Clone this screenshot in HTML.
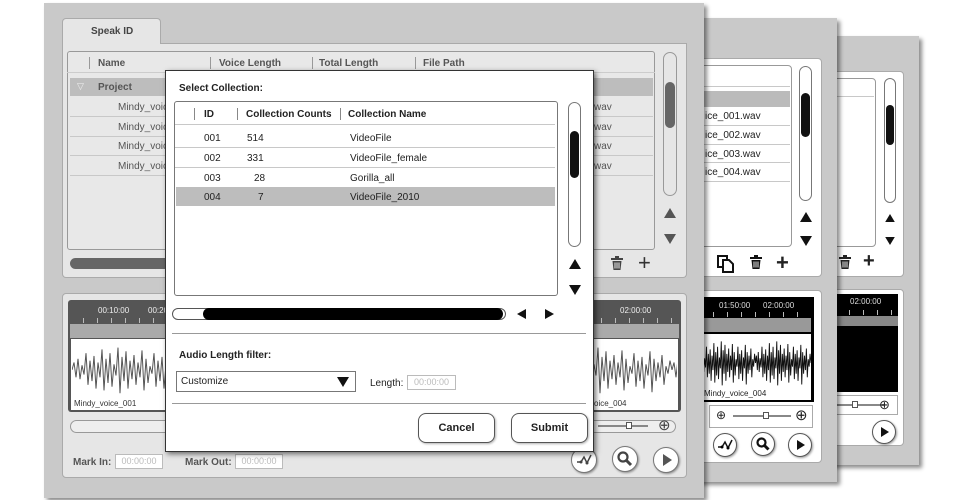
<!DOCTYPE html>
<html><head><meta charset="utf-8"><style>
*{box-sizing:border-box;margin:0;padding:0}
body{width:960px;height:500px;background:#fff;position:relative;overflow:hidden;font-family:"Liberation Sans",Arial,sans-serif;font-size:10px;color:#222}
.a{position:absolute}
.panel{background:#c9c9c9;box-shadow:3px 3px 4px rgba(0,0,0,.45)}
.grp{background:#e6e6e6;border:1px solid #aaa;border-radius:4px}
.grpw{background:#fff;border:1px solid #999;border-radius:4px}
.b{font-weight:bold}
.line{height:1px;background:#c8c8c8}
.sb{border:1px solid #777;border-radius:7px;background:#fff}
.circ{border:1.5px solid #555;border-radius:50%;background:#fff;box-shadow:1px 1px 2px rgba(0,0,0,.4)}
.tri-u{width:0;height:0;border-left:6px solid transparent;border-right:6px solid transparent;border-bottom:10px solid #111}
.tri-d{width:0;height:0;border-left:6px solid transparent;border-right:6px solid transparent;border-top:10px solid #111}
.inp{border:1px solid #bbb;background:#fff;color:#bbb;font-size:9px;text-align:center;line-height:13px}
.btn{border:1px solid #555;border-radius:8px;background:#fff;font-weight:bold;font-size:11px;text-align:center;box-shadow:1px 1px 2px rgba(0,0,0,.3)}
.ticks{background:repeating-linear-gradient(90deg,transparent 0 13px,#bbb 13px 14px)}
</style></head><body>

<svg width="0" height="0" style="position:absolute"><defs>
<polyline id="wv" fill="none" points="0,30 2,22 4,38 6,18 8,40 10,25 12,35 14,12 16,46 18,20 20,42 22,15 24,50 26,22 28,38 30,8 32,52 34,18 36,44 38,12 40,48 42,24 44,36 46,6 48,55 50,16 52,42 54,10 56,50 58,20 60,40 62,14 64,46 66,22 68,38 70,9 72,52 74,18 76,44 78,26 80,34 82,12 84,48 86,20 88,42 90,16 92,50 94,24 96,36 98,10 100,54 102,18 104,42 106,22 108,38 110,14 112,46 114,26 116,34 118,20 120,30"/>
<g id="trash"><rect x="5" y="0" width="4" height="2" fill="currentColor"/><rect x="1" y="2" width="12" height="2" fill="currentColor"/><path d="M2.5 5h9l-1 9h-7z" fill="currentColor"/><path d="M5 6.5v6M7 6.5v6M9 6.5v6" stroke="#fff" stroke-width=".9"/></g>
</defs></svg>

<!-- Panel 3 -->
<div class="a panel" style="left:830px;top:36px;width:89px;height:429px"></div>
<div class="a grp" style="left:822px;top:71px;width:82px;height:206px;background:#fff"></div>
<div class="a grpw" style="left:822px;top:78px;width:54px;height:169px"></div>
<div class="a line" style="left:822px;top:96px;width:52px"></div>
<div class="a sb" style="left:884px;top:78px;width:12px;height:125px"></div>
<div class="a" style="left:886px;top:105px;width:8px;height:40px;background:#111;border-radius:4px"></div>
<div class="a tri-u" style="left:884px;top:213px;transform:scale(.8)"></div>
<div class="a tri-d" style="left:884px;top:236px;transform:scale(.8)"></div>
<svg class="a" style="left:838px;top:255px;color:#222" width="14" height="15"><use href="#trash"/></svg>
<div class="a b" style="left:863px;top:250px;font-size:20px">+</div>
<div class="a grp" style="left:822px;top:289px;width:82px;height:157px;background:#fff"></div>
<div class="a" style="left:822px;top:294px;width:76px;height:98px;background:#000"></div>
<div class="a ticks" style="left:822px;top:310px;width:76px;height:5px"></div>
<div class="a" style="left:822px;top:316px;width:76px;height:10px;background:#888"></div>
<div class="a" style="left:850px;top:297px;color:#ddd;font-size:8px">02:00:00</div>
<div class="a" style="left:822px;top:395px;width:76px;height:20px;border:1px solid #aaa;background:#fff"></div>
<div class="a" style="left:830px;top:404px;width:55px;height:2px;background:#888"></div>
<div class="a" style="left:852px;top:401px;width:6px;height:7px;border:1px solid #555;background:#fff"></div>
<div class="a" style="left:879px;top:398px;font-size:13px;line-height:13px">⊕</div>
<div class="a circ" style="left:872px;top:420px;width:24px;height:24px"></div>
<div class="a" style="left:881px;top:427px;width:0;height:0;border-top:5px solid transparent;border-bottom:5px solid transparent;border-left:8px solid #111"></div>

<!-- Panel 2 -->
<div class="a panel" style="left:690px;top:18px;width:147px;height:464px"></div>
<div class="a grp" style="left:700px;top:58px;width:122px;height:219px;background:#fff"></div>
<div class="a grpw" style="left:700px;top:65px;width:92px;height:182px"></div>
<div class="a line" style="left:700px;top:86px;width:90px"></div>
<div class="a" style="left:700px;top:91px;width:90px;height:16px;background:#bbb"></div>
<div class="a" style="left:705px;top:111px;font-size:10px">ice_001.wav</div>
<div class="a line" style="left:700px;top:125px;width:90px"></div>
<div class="a" style="left:705px;top:130px;font-size:10px">ice_002.wav</div>
<div class="a line" style="left:700px;top:144px;width:90px"></div>
<div class="a" style="left:705px;top:149px;font-size:10px">ice_003.wav</div>
<div class="a line" style="left:700px;top:162px;width:90px"></div>
<div class="a" style="left:705px;top:167px;font-size:10px">ice_004.wav</div>
<div class="a line" style="left:700px;top:181px;width:90px"></div>
<div class="a sb" style="left:799px;top:66px;width:13px;height:135px"></div>
<div class="a" style="left:801px;top:93px;width:9px;height:44px;background:#111;border-radius:5px"></div>
<div class="a tri-u" style="left:800px;top:212px"></div>
<div class="a tri-d" style="left:800px;top:236px"></div>
<svg class="a" style="left:717px;top:255px" width="18" height="18"><rect x="1" y="1" width="9" height="11" fill="#fff" stroke="#111" stroke-width="2"/><path d="M6 5h6l4 4v8H6z" fill="#fff" stroke="#111" stroke-width="2"/></svg>
<svg class="a" style="left:749px;top:255px;color:#111" width="14" height="15"><use href="#trash"/></svg>
<div class="a b" style="left:776px;top:250px;font-size:22px">+</div>
<div class="a grp" style="left:700px;top:290px;width:122px;height:173px;background:#fff"></div>
<div class="a" style="left:700px;top:297px;width:114px;height:105px;background:#000"></div>
<div class="a ticks" style="left:700px;top:312px;width:111px;height:5px"></div>
<div class="a" style="left:700px;top:318px;width:111px;height:14px;background:#999"></div>
<div class="a" style="left:719px;top:301px;color:#ddd;font-size:8px">01:50:00</div>
<div class="a" style="left:763px;top:301px;color:#ddd;font-size:8px">02:00:00</div>
<div class="a" style="left:700px;top:334px;width:111px;height:66px;background:#fff"></div>
<svg class="a" style="left:700px;top:336px" width="111" height="52" viewBox="0 0 240 58" preserveAspectRatio="none"><g stroke="#111" stroke-width="2"><use href="#wv"/><use href="#wv" x="120"/></g></svg>
<div class="a" style="left:704px;top:389px;font-size:8px;background:#fff">Mindy_voice_004</div>
<div class="a" style="left:709px;top:405px;width:104px;height:23px;border:1px solid #aaa;background:#fff"></div>
<div class="a" style="left:716px;top:409px;font-size:12px;line-height:12px">⊕</div>
<div class="a" style="left:733px;top:415px;width:58px;height:2px;background:#888"></div>
<div class="a" style="left:763px;top:412px;width:6px;height:7px;border:1px solid #555;background:#fff"></div>
<div class="a" style="left:795px;top:408px;font-size:15px;line-height:15px">⊕</div>
<div class="a circ" style="left:713px;top:433px;width:24px;height:24px"></div>
<svg class="a" style="left:716px;top:437px" width="18" height="16"><path d="M2 10h4l3-5 3 6 4-8" fill="none" stroke="#111" stroke-width="1.5"/><circle cx="6" cy="10" r="1.5"/><circle cx="12" cy="11" r="1.5"/></svg>
<div class="a circ" style="left:751px;top:432px;width:24px;height:24px"></div>
<svg class="a" style="left:755px;top:436px" width="16" height="16"><circle cx="6.5" cy="6.5" r="4" fill="none" stroke="#111" stroke-width="2.2"/><path d="M9.5 9.5l4 4" stroke="#111" stroke-width="3"/></svg>
<div class="a circ" style="left:788px;top:433px;width:24px;height:24px"></div>
<div class="a" style="left:797px;top:440px;width:0;height:0;border-top:5px solid transparent;border-bottom:5px solid transparent;border-left:8px solid #111"></div>

<!-- Panel 1 -->
<div class="a panel" style="left:44px;top:3px;width:660px;height:495px"></div>
<div class="a" style="left:62px;top:18px;width:99px;height:27px;background:#e6e6e6;border:1px solid #aaa;border-bottom:none;border-radius:4px 4px 0 0"></div>
<div class="a b" style="left:91px;top:26px;color:#444">Speak ID</div>
<div class="a" style="left:62px;top:44px;width:625px;height:234px;background:#e6e6e6;border:1px solid #aaa;border-top:none;border-radius:0 0 4px 4px"></div>
<div class="a" style="left:160px;top:43px;width:527px;height:1px;background:#aaa"></div>
<div class="a" style="left:67px;top:51px;width:588px;height:199px;border:1px solid #999;border-radius:3px;background:#e8e8e8"></div>
<div class="a" style="left:67px;top:51px;width:588px;height:22px;border-bottom:1px solid #ccc"></div>
<div class="a" style="left:89px;top:57px;width:1px;height:12px;background:#999"></div>
<div class="a b" style="left:98px;top:58px;color:#555">Name</div>
<div class="a" style="left:210px;top:57px;width:1px;height:12px;background:#999"></div>
<div class="a b" style="left:219px;top:58px;color:#555">Voice Length</div>
<div class="a" style="left:312px;top:57px;width:1px;height:12px;background:#999"></div>
<div class="a b" style="left:319px;top:58px;color:#555">Total Length</div>
<div class="a" style="left:415px;top:57px;width:1px;height:12px;background:#999"></div>
<div class="a b" style="left:423px;top:58px;color:#555">File Path</div>
<div class="a" style="left:70px;top:78px;width:583px;height:18px;background:#bdbdbd"></div>
<div class="a" style="left:77px;top:81px;color:#eee;font-size:9px">▽</div>
<div class="a b" style="left:98px;top:82px;color:#555">Project</div>
<div class="a" style="left:118px;top:102px;color:#555">Mindy_voice</div>
<div class="a line" style="left:70px;top:116px;width:583px"></div>
<div class="a" style="left:118px;top:122px;color:#555">Mindy_voice</div>
<div class="a line" style="left:70px;top:136px;width:583px"></div>
<div class="a" style="left:118px;top:141px;color:#555">Mindy_voice</div>
<div class="a line" style="left:70px;top:155px;width:583px"></div>
<div class="a" style="left:118px;top:161px;color:#555">Mindy_voice</div>
<div class="a line" style="left:70px;top:175px;width:583px"></div>
<div class="a" style="left:594px;top:102px;color:#555">wav</div>
<div class="a" style="left:594px;top:122px;color:#555">wav</div>
<div class="a" style="left:594px;top:141px;color:#555">wav</div>
<div class="a" style="left:594px;top:161px;color:#555">wav</div>
<div class="a sb" style="left:663px;top:52px;width:14px;height:144px;border-color:#999;background:#e6e6e6"></div>
<div class="a" style="left:665px;top:82px;width:10px;height:46px;background:#666;border-radius:5px"></div>
<div class="a tri-u" style="left:664px;top:208px;border-bottom-color:#555"></div>
<div class="a tri-d" style="left:664px;top:234px;border-top-color:#555"></div>
<div class="a" style="left:70px;top:258px;width:100px;height:11px;background:#666;border-radius:6px"></div>
<svg class="a" style="left:610px;top:256px;color:#444" width="14" height="15"><use href="#trash"/></svg>
<div class="a" style="left:638px;top:250px;font-size:22px;color:#333">+</div>
<div class="a" style="left:62px;top:293px;width:625px;height:185px;background:#e6e6e6;border:1px solid #aaa;border-radius:4px"></div>
<div class="a" style="left:68px;top:300px;width:613px;height:112px;background:#555;border-radius:3px"></div>
<div class="a ticks" style="left:70px;top:318px;width:609px;height:5px"></div>
<div class="a" style="left:70px;top:324px;width:609px;height:14px;background:#aaa"></div>
<div class="a" style="left:71px;top:339px;width:607px;height:71px;background:#fff"></div>
<svg class="a" style="left:72px;top:342px" width="605" height="54" viewBox="0 0 605 58" preserveAspectRatio="none">
<g stroke="#555"><use href="#wv"/><use href="#wv" x="120"/><use href="#wv" x="240"/><use href="#wv" x="360"/><use href="#wv" x="480"/><use href="#wv" x="600"/></g></svg>
<div class="a" style="left:74px;top:399px;font-size:8px;color:#333;background:#fff">Mindy_voice_001</div>
<div class="a" style="left:594px;top:399px;font-size:8px;color:#333;background:#fff">oice_004</div>
<div class="a" style="left:98px;top:306px;color:#eee;font-size:8px">00:10:00</div>
<div class="a" style="left:148px;top:306px;color:#eee;font-size:8px">00:20:00</div>
<div class="a" style="left:620px;top:306px;color:#eee;font-size:8px">02:00:00</div>
<div class="a" style="left:70px;top:420px;width:606px;height:13px;border:1px solid #999;border-radius:7px;background:#eee"></div>
<div class="a" style="left:598px;top:425px;width:50px;height:2px;background:#888"></div>
<div class="a" style="left:626px;top:422px;width:6px;height:7px;border:1px solid #555;background:#fff"></div>
<div class="a" style="left:658px;top:418px;font-size:15px;line-height:15px;color:#444">⊕</div>
<div class="a b" style="left:73px;top:457px;color:#555">Mark In:</div>
<div class="a inp" style="left:115px;top:454px;width:48px;height:15px">00:00:00</div>
<div class="a b" style="left:185px;top:457px;color:#555">Mark Out:</div>
<div class="a inp" style="left:235px;top:454px;width:48px;height:15px">00:00:00</div>
<div class="a circ" style="left:571px;top:447px;width:26px;height:26px;border-color:#777"></div>
<svg class="a" style="left:575px;top:451px" width="18" height="18"><path d="M2 11h4l3-5 3 6 4-8" fill="none" stroke="#444" stroke-width="1.5"/><circle cx="6" cy="11" r="1.5" fill="#444"/><circle cx="12" cy="12" r="1.5" fill="#444"/></svg>
<div class="a circ" style="left:612px;top:446px;width:26px;height:26px;border-color:#777"></div>
<svg class="a" style="left:616px;top:450px" width="18" height="18"><circle cx="7" cy="7" r="4.5" fill="none" stroke="#444" stroke-width="2.2"/><path d="M10 10l5 5" stroke="#444" stroke-width="3"/></svg>
<div class="a circ" style="left:653px;top:447px;width:26px;height:26px;border-color:#777"></div>
<div class="a" style="left:663px;top:454px;width:0;height:0;border-top:6px solid transparent;border-bottom:6px solid transparent;border-left:9px solid #555"></div>

<!-- Dialog -->
<div class="a" style="left:165px;top:70px;width:429px;height:382px;background:#fff;border:1px solid #333;box-shadow:2px 2px 5px rgba(0,0,0,.55)"></div>
<div class="a b" style="left:179px;top:83px;font-size:10px">Select Collection:</div>
<div class="a" style="left:174px;top:101px;width:384px;height:195px;border:1px solid #777;border-radius:3px"></div>
<div class="a" style="left:194px;top:108px;width:1px;height:12px;background:#888"></div>
<div class="a b" style="left:204px;top:109px">ID</div>
<div class="a" style="left:237px;top:108px;width:1px;height:12px;background:#888"></div>
<div class="a b" style="left:246px;top:109px">Collection Counts</div>
<div class="a" style="left:340px;top:108px;width:1px;height:12px;background:#888"></div>
<div class="a b" style="left:348px;top:109px">Collection Name</div>
<div class="a line" style="left:175px;top:124px;width:380px"></div>
<div class="a" style="left:204px;top:133px">001</div><div class="a" style="left:247px;top:133px">514</div><div class="a" style="left:350px;top:133px">VideoFile</div>
<div class="a line" style="left:175px;top:147px;width:380px"></div>
<div class="a" style="left:204px;top:153px">002</div><div class="a" style="left:247px;top:153px">331</div><div class="a" style="left:350px;top:153px">VideoFile_female</div>
<div class="a line" style="left:175px;top:167px;width:380px"></div>
<div class="a" style="left:204px;top:173px">003</div><div class="a" style="left:254px;top:173px">28</div><div class="a" style="left:350px;top:173px">Gorilla_all</div>
<div class="a" style="left:176px;top:187px;width:379px;height:19px;background:#bdbdbd"></div>
<div class="a" style="left:204px;top:192px">004</div><div class="a" style="left:258px;top:192px">7</div><div class="a" style="left:350px;top:192px">VideoFile_2010</div>
<div class="a sb" style="left:568px;top:102px;width:13px;height:145px"></div>
<div class="a" style="left:570px;top:131px;width:9px;height:47px;background:#111;border-radius:5px"></div>
<div class="a tri-u" style="left:569px;top:259px"></div>
<div class="a tri-d" style="left:569px;top:285px"></div>
<div class="a" style="left:172px;top:308px;width:334px;height:12px;border:1px solid #555;border-radius:6px"></div>
<div class="a" style="left:203px;top:308px;width:300px;height:12px;background:#000;border-radius:6px"></div>
<div class="a" style="left:517px;top:309px;width:0;height:0;border-top:5px solid transparent;border-bottom:5px solid transparent;border-right:9px solid #111"></div>
<div class="a" style="left:545px;top:309px;width:0;height:0;border-top:5px solid transparent;border-bottom:5px solid transparent;border-left:9px solid #111"></div>
<div class="a" style="left:172px;top:333px;width:414px;height:1px;background:#999"></div>
<div class="a b" style="left:179px;top:350px">Audio Length filter:</div>
<div class="a" style="left:176px;top:371px;width:180px;height:21px;border:1px solid #777"></div>
<div class="a" style="left:181px;top:376px">Customize</div>
<div class="a" style="left:337px;top:377px;width:0;height:0;border-left:6px solid transparent;border-right:6px solid transparent;border-top:10px solid #111"></div>
<div class="a" style="left:370px;top:378px">Length:</div>
<div class="a inp" style="left:407px;top:375px;width:49px;height:15px">00:00:00</div>
<div class="a" style="left:172px;top:403px;width:414px;height:1px;background:#999"></div>
<div class="a btn" style="left:418px;top:413px;width:77px;height:30px;line-height:28px">Cancel</div>
<div class="a btn" style="left:511px;top:413px;width:77px;height:30px;line-height:28px">Submit</div>
</body></html>
